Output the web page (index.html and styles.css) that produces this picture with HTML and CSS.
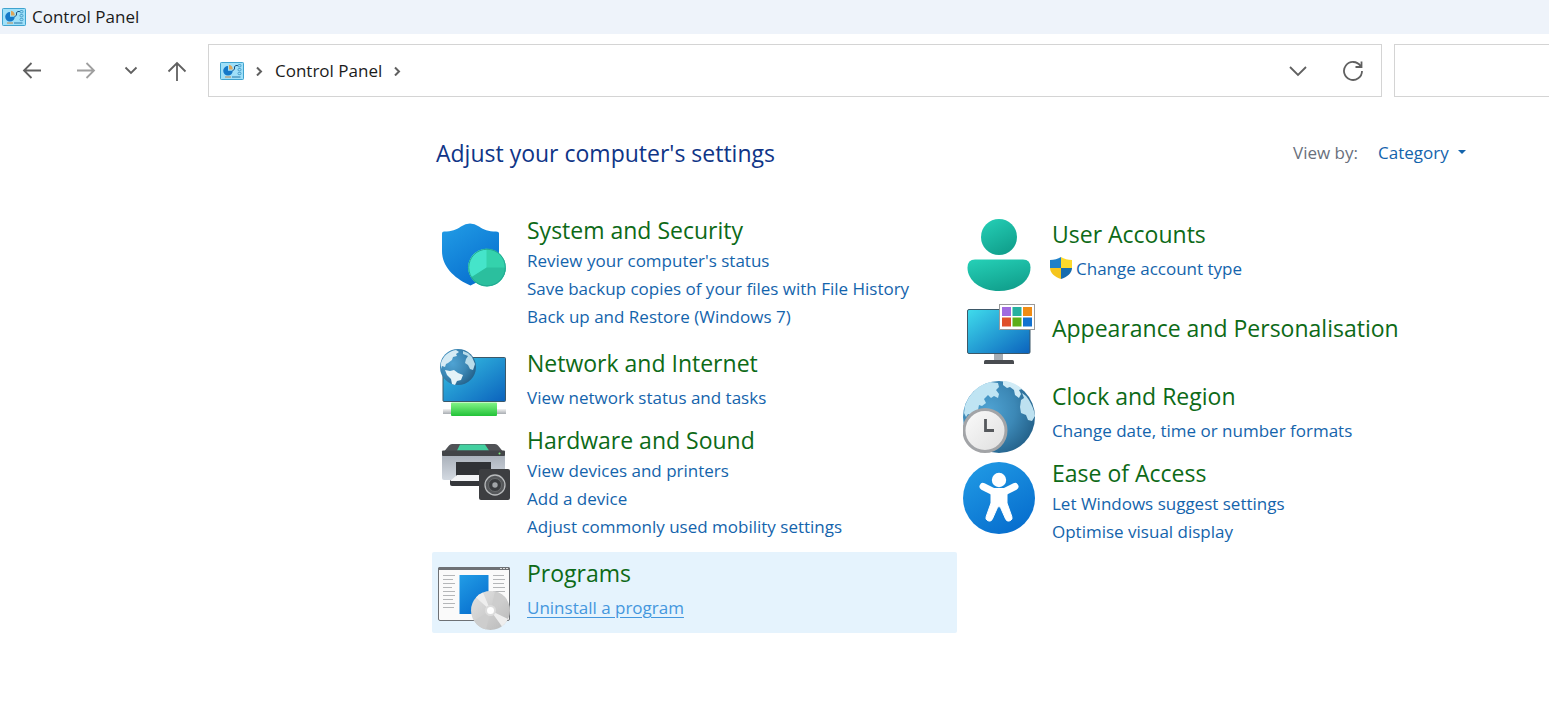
FILE: index.html
```html
<!DOCTYPE html>
<html lang="en">
<head>
  <meta charset="UTF-8">
  <meta name="viewport" content="width=device-width, initial-scale=1.0">
  <title>Control Panel</title>
  <link rel="stylesheet" href="styles.css">
</head>
<body>

<!-- Shared drawings -->
<svg class="defs" width="0" height="0" aria-hidden="true">
  <defs>
    <linearGradient id="blue" x1="0" y1="0" x2="0.6" y2="1">
      <stop offset="0" stop-color="#229de6"/>
      <stop offset="1" stop-color="#0870cf"/>
    </linearGradient>
    <linearGradient id="screen" x1="0" y1="0" x2="1" y2="1">
      <stop offset="0" stop-color="#3fdcec"/>
      <stop offset="1" stop-color="#0b62bd"/>
    </linearGradient>
    <linearGradient id="net" x1="0" y1="0" x2="1" y2="1">
      <stop offset="0" stop-color="#38c4e4"/>
      <stop offset="1" stop-color="#0b62bd"/>
    </linearGradient>
    <linearGradient id="teal" x1="0.2" y1="0" x2="0.7" y2="1">
      <stop offset="0" stop-color="#24cdb4"/>
      <stop offset="1" stop-color="#109e8b"/>
    </linearGradient>
    <linearGradient id="cable" x1="0" y1="0" x2="0" y2="1">
      <stop offset="0" stop-color="#84f488"/>
      <stop offset="1" stop-color="#22c238"/>
    </linearGradient>
    <linearGradient id="metal" x1="0" y1="0" x2="0" y2="1">
      <stop offset="0" stop-color="#f2f2f2"/>
      <stop offset="1" stop-color="#a8adb2"/>
    </linearGradient>
    <linearGradient id="disc" x1="0" y1="0" x2="1" y2="1">
      <stop offset="0" stop-color="#e4e4e4"/>
      <stop offset="1" stop-color="#b8b8b8"/>
    </linearGradient>
    <linearGradient id="dial" x1="0" y1="0" x2="1" y2="1">
      <stop offset="0" stop-color="#fbfbfb"/>
      <stop offset="1" stop-color="#dedede"/>
    </linearGradient>
    <linearGradient id="case" x1="0" y1="0" x2="0" y2="1">
      <stop offset="0" stop-color="#a9b0ba"/>
      <stop offset="1" stop-color="#d3d9e1"/>
    </linearGradient>
    <radialGradient id="globe" cx="0.35" cy="0.4" r="0.75">
      <stop offset="0" stop-color="#4fa3d3"/>
      <stop offset="0.5" stop-color="#3c88b6"/>
      <stop offset="1" stop-color="#1f5a82"/>
    </radialGradient>
    <symbol id="panel" viewBox="0 0 24 18">
      <rect x="0.5" y="0.5" width="23" height="17" rx="0.8" fill="#9fe0f9" stroke="#3fa3cf"/>
      <path d="M8 4a4.800 4.800 0 1 0 4.800 4.800H8z" fill="#1478c8"/>
      <path d="M9 2.800a5 5 0 0 1 3.800 4.600H9z" fill="#dda55c"/>
      <path d="M12.500 9l2-2V4.500l1.500-1h2" fill="none" stroke="#174f80" stroke-width="1"/>
      <g fill="none" stroke="#3a92c2" stroke-width="0.8">
        <rect x="18" y="2.500" width="3" height="2.400" rx="1"/>
        <rect x="18" y="6.500" width="3" height="2.400" rx="1"/>
        <rect x="18" y="10.300" width="3" height="2.400" rx="1"/>
      </g>
      <path d="M5 15h6" stroke="#c08a50" stroke-width="1"/>
      <path d="M12 15h8.500" stroke="#2878a8" stroke-width="1"/>
    </symbol>
  </defs>
</svg>

<header class="titlebar">
  <svg class="panel-icon" aria-hidden="true"><use href="#panel"/></svg>
  <span>Control Panel</span>
</header>

<div class="toolbar">
  <div class="history">
    <button type="button" aria-label="Back">
      <svg width="20" height="20" viewBox="0 0 20 20"><path d="M19 9.500H2M9.500 2L2 9.500 9.500 17"/></svg>
    </button>
    <button type="button" class="dim" aria-label="Forward">
      <svg width="20" height="20" viewBox="0 0 20 20"><path d="M1 9.500h17M10.500 2L18 9.500 10.500 17"/></svg>
    </button>
    <button type="button" class="recent" aria-label="Recent locations">
      <svg width="14" height="20" viewBox="0 0 14 20"><path d="M1.500 6.500L7 12l5.500-5.500"/></svg>
    </button>
    <button type="button" class="up" aria-label="Up">
      <svg width="20" height="20" viewBox="0 0 20 20"><path d="M10 20V2M1.500 10.500L10 2l8.500 8.500"/></svg>
    </button>
  </div>

  <nav class="address">
    <svg class="panel-icon" aria-hidden="true"><use href="#panel"/></svg>
    <svg class="crumb" width="7" height="10" viewBox="0 0 7 10"><path d="M1 1.500l4 4-4 4"/></svg>
    <a href="#">Control Panel</a>
    <svg class="crumb" width="7" height="10" viewBox="0 0 7 10"><path d="M1 1.500l4 4-4 4"/></svg>
    <div class="address-buttons">
      <button type="button" aria-label="Previous locations">
        <svg width="18" height="20" viewBox="0 0 18 20"><path d="M1 6l8 8 8-8"/></svg>
      </button>
      <button type="button" aria-label="Refresh">
        <svg width="20" height="22" viewBox="0 0 20 22"><path d="M17.500 6A9 9 0 1 0 19 11M18.500 1.500V7h-6"/></svg>
      </button>
    </div>
  </nav>

  <input class="search" type="search" aria-label="Search Control Panel">
</div>

<main class="content">
  <div class="heading">
    <h1>Adjust your computer's settings</h1>
    <div class="view-by">
      <label for="view">View by:</label>
      <span class="view-select">
        <select id="view">
          <option>Category</option>
        </select>
      </span>
    </div>
  </div>

  <div class="columns">
    <div class="column">
      <section class="category">
        <svg class="icon" viewBox="0 0 72 72" aria-hidden="true">
          <path d="M4 14.500q0-2 2-2c8 0 12-1.500 17-5q9-6 18 0c5 3.500 9 5 17 5q3 0 3 2V32c0 17-14 28-28.500 34.500C18 60 4 49 4 32z" fill="url(#blue)"/>
          <circle cx="49" cy="48.500" r="18.800" fill="#34d2ac"/>
          <path d="M48.500 49V29.700A18.800 18.800 0 0 0 33 58.500z" fill="#45e4ca"/>
          <path d="M48.500 48.500H67.800A18.800 18.800 0 0 1 33 58.500z" fill="#2bbf9e"/>
          <circle cx="49" cy="48.500" r="18.300" fill="none" stroke="#23a892"/>
        </svg>
        <div class="text">
          <h2><a href="#">System and Security</a></h2>
          <ul>
            <li><a href="#">Review your computer's status</a></li>
            <li><a href="#">Save backup copies of your files with File History</a></li>
            <li><a href="#">Back up and Restore (Windows 7)</a></li>
          </ul>
        </div>
      </section>

      <section class="category single">
        <svg class="icon" viewBox="0 0 72 72" aria-hidden="true">
          <rect x="5" y="9.500" width="62.500" height="44" rx="1" fill="url(#net)" stroke="#3c5868"/>
          <rect x="5" y="61" width="63" height="5" fill="url(#metal)"/>
          <rect x="13" y="54.500" width="46" height="13.500" rx="1" fill="url(#cable)"/>
          <circle cx="20" cy="19" r="18" fill="url(#globe)"/>
          <path d="M3 15C5 8 11 3 18 2l3 2-3 2 1 2-4 1-1 3-4 3-2 1-1 3-3-1-1 3z" fill="#d5ebf5"/>
          <path d="M7 22l5 1 4-1 4 3 5 2-2 5-4 1-2 4-3-1-1-5-4-4z" fill="#e4f3f8"/>
          <path d="M25 3l5 2 4 4 3 7-2 6-3-1-2-4-3-2 1-4 2-3-5-2z" fill="#b9dcea"/>
        </svg>
        <div class="text">
          <h2><a href="#">Network and Internet</a></h2>
          <ul>
            <li><a href="#">View network status and tasks</a></li>
          </ul>
        </div>
      </section>

      <section class="category">
        <svg class="icon" viewBox="0 0 72 72" aria-hidden="true">
          <path d="M14 15h43q2 0 3 1.500L67 25H4l7-8.500Q12 15 14 15z" fill="#505256"/>
          <path d="M22 15.500h25l4 6H19z" fill="#43d0a0"/>
          <path d="M4 26h63v23q0 2-2 2H6q-2 0-2-2z" fill="url(#case)"/>
          <rect x="4" y="21.500" width="63" height="5.500" rx="1" fill="#424448"/>
          <circle cx="61.500" cy="24.500" r="1" fill="#7ee878"/>
          <path d="M18 33h35v18H18z" fill="#303236"/>
          <path d="M12 51h46v6H14q-2 0-2-2z" fill="#35373b"/>
          <path d="M19 46h32v6H12z" fill="#f3f4f6"/>
          <rect x="41" y="40" width="31" height="31" rx="2" fill="#3d3e41"/>
          <circle cx="57" cy="56" r="10" fill="#55575a" stroke="#b8babc" stroke-width="1.300"/>
          <circle cx="57" cy="56" r="6.500" fill="#3a3c3f" stroke="#707274" stroke-width="0.800"/>
          <circle cx="57" cy="56" r="2.700" fill="#a2a5a8"/>
        </svg>
        <div class="text">
          <h2><a href="#">Hardware and Sound</a></h2>
          <ul>
            <li><a href="#">View devices and printers</a></li>
            <li><a href="#">Add a device</a></li>
            <li><a href="#">Adjust commonly used mobility settings</a></li>
          </ul>
        </div>
      </section>

      <section class="category single active">
        <svg class="icon" viewBox="0 0 72 72" aria-hidden="true">
          <rect x="0.500" y="9.500" width="71" height="53" rx="1.500" fill="#fafafa" stroke="#6e7175"/>
          <path d="M0 12V10.500Q0 9 1.500 9h69Q72 9 72 10.500V12z" fill="#6e7175"/>
          <path d="M62 10.500h8" stroke="#ddd" stroke-dasharray="2 1"/>
          <path d="M5 17.500h12M5 21.500h10M5 25.500h12M5 29.500h9M5 33.500h12M5 37.500h12M5 41.500h10M5 45.500h12M5 49.500h11M55 17.500h11M55 21.500h12M55 25.500h11M55 29.500h12M55 33.500h12" stroke="#b4b6b8"/>
          <rect x="21.500" y="17" width="29" height="39" fill="url(#blue)"/>
          <circle cx="52.500" cy="52.500" r="19.500" fill="url(#disc)"/>
          <path d="M52.500 52.500L38 39.500A19.500 19.500 0 0 1 45 34.500zM52.500 52.500l17.500 8.500a19.500 19.500 0 0 1-6 7.500z" fill="#eeeeee"/>
          <path d="M52.500 52.500L57 33.500a19.500 19.500 0 0 1 12 8zM52.500 52.500L48 71.500a19.500 19.500 0 0 1-12-9z" fill="#cdcdcd"/>
          <circle cx="52.500" cy="52.500" r="4.500" fill="#fff" stroke="#dcdcdc" stroke-width="2"/>
        </svg>
        <div class="text">
          <h2><a href="#">Programs</a></h2>
          <ul>
            <li><a href="#">Uninstall a program</a></li>
          </ul>
        </div>
      </section>
    </div>

    <div class="column">
      <section class="category single">
        <svg class="icon" viewBox="0 0 72 72" aria-hidden="true">
          <circle cx="36" cy="18" r="18" fill="url(#teal)"/>
          <path d="M12 40.500h48q7.500 0 7.500 8C67.500 62 54 72 36 72S4.500 62 4.500 48.500q0-8 7.500-8z" fill="url(#teal)"/>
        </svg>
        <div class="text">
          <h2><a href="#">User Accounts</a></h2>
          <ul>
            <li class="shielded">
              <svg width="22" height="22" viewBox="0 0 22 22" aria-hidden="true">
                <path d="M11 0C8 2 4 3 0 3v8h11z" fill="#1e80c8"/>
                <path d="M11 0c3 2 7 3 11 3v8H11z" fill="#fcd92c"/>
                <path d="M0 11c0 5 5 9 11 11V11z" fill="#f5c51d"/>
                <path d="M22 11c0 5-5 9-11 11V11z" fill="#176cae"/>
              </svg>
              <a href="#">Change account type</a>
            </li>
          </ul>
        </div>
      </section>

      <section class="category alone">
        <svg class="icon" viewBox="0 0 72 72" aria-hidden="true">
          <path d="M31 53h9v8h-9z" fill="#a6adb4"/>
          <path d="M21 61.500q0-1.500 1.500-1.500h27q1.500 0 1.500 1.500V64H21z" fill="#484b50"/>
          <rect x="4.500" y="9.500" width="62.500" height="44" rx="1.500" fill="url(#screen)" stroke="#3d5868"/>
          <rect x="36.500" y="4.500" width="35" height="25" fill="#fff" stroke="#9a9a9a"/>
          <rect x="39" y="7" width="9" height="9" fill="#a06ae0"/>
          <rect x="49.500" y="7" width="9" height="9" fill="#26b0a0"/>
          <rect x="60" y="7" width="9" height="9" fill="#f08c14"/>
          <rect x="39" y="17.500" width="9" height="9" fill="#e0502a"/>
          <rect x="49.500" y="17.500" width="9" height="9" fill="#5cae18"/>
          <rect x="60" y="17.500" width="9" height="9" fill="#1272d0"/>
        </svg>
        <div class="text">
          <h2><a href="#">Appearance and Personalisation</a></h2>
        </div>
      </section>

      <section class="category single">
        <svg class="icon" viewBox="0 0 72 72" aria-hidden="true">
          <circle cx="36" cy="36" r="36" fill="url(#globe)"/>
          <path d="M2 25C6 13 15 4 27 1l8 1 1 4-3 3 3 4-1 4-4-2-3 2-3-3-4 4 2 4-4 3-3-1-1 5-4 1-3 4-3-1-2 3-2-4z" fill="#bfe4f3"/>
          <path d="M40 0c7 0 14 3 19 8l-3 1 2 4-2 4-4-3-1-5-4-3-3 1-4-3z" fill="#d0ebf6"/>
          <path d="M58 19l3-2-2-5 4 3c4 5 8 12 9 20l-3 5-4-1-2-5-5-2-1-6z" fill="#bde1f0"/>
          <path d="M15 29l4-1 2 2-3 1z" fill="#9acbe3"/>
          <circle cx="22" cy="49.500" r="21" fill="url(#dial)" stroke="#a2a4a7" stroke-width="3"/>
          <path d="M22.500 38v11.500h8.500" fill="none" stroke="#55585c" stroke-width="2.800"/>
        </svg>
        <div class="text">
          <h2><a href="#">Clock and Region</a></h2>
          <ul>
            <li><a href="#">Change date, time or number formats</a></li>
          </ul>
        </div>
      </section>

      <section class="category">
        <svg class="icon" viewBox="0 0 72 72" aria-hidden="true">
          <circle cx="36" cy="36" r="36" fill="url(#blue)"/>
          <circle cx="36" cy="18" r="7.200" fill="#fff"/>
          <path d="M20 24.500L30 29.500H42L52 24.500" fill="none" stroke="#fff" stroke-width="7" stroke-linecap="round" stroke-linejoin="round"/>
          <path d="M28 29h16v12l4.800 13.500a3.300 3.300 0 0 1-6.200 2.500L37.500 45.500q-1.500-2-3 0L29.400 57a3.300 3.300 0 0 1-6.200-2.500L28 41z" fill="#fff" stroke="#fff"/>
        </svg>
        <div class="text">
          <h2><a href="#">Ease of Access</a></h2>
          <ul>
            <li><a href="#">Let Windows suggest settings</a></li>
            <li><a href="#">Optimise visual display</a></li>
          </ul>
        </div>
      </section>
    </div>
  </div>
</main>

</body>
</html>
```
FILE: styles.css
```css
/* General Styling */
* {
  box-sizing: border-box;
}

body {
  margin: 0;
  font-family: 'Open Sans', 'Noto Sans', sans-serif;
  font-size: 17px;
  line-height: 28px;
  background: #fff;
  color: #1b1b1b;
  overflow-x: hidden;
}

a {
  color: #1464ac;
  text-decoration: none;
}

a:hover {
  text-decoration: underline;
}

button {
  display: flex;
  align-items: center;
  justify-content: center;
  padding: 0;
  border: none;
  background: none;
  cursor: pointer;
}

button svg,
.crumb {
  fill: none;
  stroke: #606060;
  stroke-width: 1.8;
}

.defs {
  position: absolute;
}

.panel-icon {
  width: 24px;
  height: 18px;
  flex: none;
}

/* Title bar */
.titlebar {
  display: flex;
  align-items: center;
  gap: 6px;
  height: 34px;
  padding: 0 2px;
  background: #eef3fa;
}

/* Toolbar */
.toolbar {
  display: flex;
  align-items: center;
  gap: 12px;
  padding-top: 10px;
}

.history {
  display: flex;
  align-items: center;
  width: 196px;
  padding-left: 22px;
}

.history button {
  width: 20px;
  height: 32px;
  margin-right: 34px;
}

.history .dim {
  margin-right: 28px;
  opacity: 0.6;
}

.history .recent {
  width: 14px;
  margin-right: 29px;
}

.history .up {
  margin-right: 0;
}

.address {
  display: flex;
  flex: 1;
  align-items: center;
  gap: 12px;
  height: 53px;
  padding: 0 18px 0 11px;
  border: 1px solid #d4d4d4;
}

.address a {
  color: #1b1b1b;
}

.crumb {
  stroke-width: 2;
}

.address-buttons {
  display: flex;
  gap: 36px;
  margin-left: auto;
}

.search {
  width: 155px;
  height: 53px;
  border: 1px solid #d4d4d4;
  border-right: none;
  border-radius: 0;
  background: #fff;
}

/* Content */
.content {
  padding: 41px 60px 40px 432px;
}

.heading {
  display: flex;
  align-items: center;
  justify-content: space-between;
  max-width: 1034px;
  padding-left: 4px;
}

h1,
h2 {
  margin: 0;
  font-size: 23px;
  font-weight: normal;
  line-height: 30px;
}

h1 {
  color: #0f3587;
}

h2 a {
  color: #0d6a17;
}

.view-by {
  display: flex;
  align-items: center;
  gap: 20px;
  color: #69707c;
}

.view-select {
  display: flex;
  align-items: center;
}

.view-select::after {
  content: "";
  margin-bottom: 3px;
  border: 4px solid transparent;
  border-top-color: #1464ac;
  border-bottom: none;
}

.view-select select {
  appearance: none;
  width: 80px;
  padding: 0;
  border: none;
  background: none;
  color: #1464ac;
  font: inherit;
}

.columns {
  display: grid;
  grid-template-columns: repeat(2, minmax(0, 525px));
  margin-top: 45px;
}

/* Categories */
.category {
  display: flex;
  gap: 17px;
  min-height: 81px;
  padding: 2px 6px 11px;
}

.icon {
  width: 72px;
  height: 72px;
  margin-top: 4px;
  flex: none;
}

.category ul {
  margin: 2px 0 0;
  padding: 0;
  list-style: none;
}

.single {
  padding-bottom: 3px;
}

.single .text {
  padding-top: 4px;
}

.single ul {
  margin-top: 6px;
}

.alone {
  align-items: center;
  padding-bottom: 3px;
}

.alone .text {
  padding-bottom: 12px;
}

.shielded {
  display: flex;
  align-items: center;
  gap: 4px;
  margin-left: -2px;
}

.shielded svg {
  margin-bottom: 3px;
}

.active {
  border-radius: 2px;
  background: #e5f3fd;
}

.active li a {
  color: #4497dd;
  text-decoration: underline;
  text-underline-offset: 3px;
}

@media (max-width: 1300px) {
  .content {
    padding-left: 60px;
  }
}

@media (max-width: 900px) {
  .columns {
    grid-template-columns: 1fr;
  }
}
```
